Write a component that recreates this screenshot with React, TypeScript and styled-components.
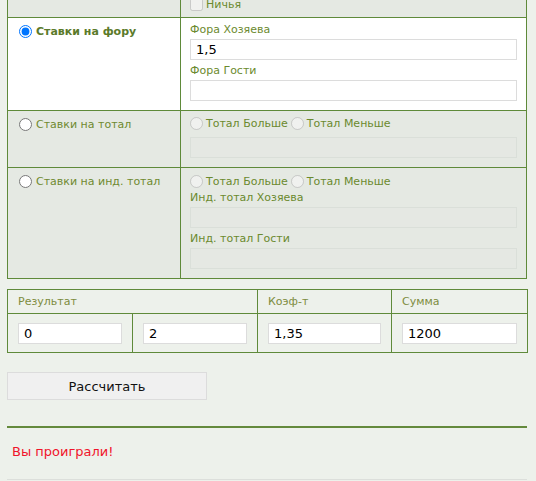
import React from "react";
import styled, { createGlobalStyle } from "styled-components";

const GlobalStyle = createGlobalStyle`
  html, body {
    margin: 0;
    padding: 0;
    background: #edf1eb;
    overflow: hidden;
  }
  body {
    font-family: "DejaVu Sans", Verdana, sans-serif;
    font-size: 11px;
    color: #6b8a2e;
  }
`;

const Page = styled.div`
  width: 520px;
  padding: 0 0 0 7px;
  margin-top: -9px;
`;

const BetTable = styled.table`
  width: 520px;
  border-collapse: collapse;
  table-layout: fixed;
`;

const Row = styled.tr<{ $white?: boolean }>`
  background: ${(p) => (p.$white ? "#ffffff" : "#e5e9e3")};
`;

const SideCell = styled.td`
  width: 173px;
  border: 1px solid #5f8a3a;
  vertical-align: top;
  padding: 5px 6px 5px 11px;
  box-sizing: border-box;
`;

const FieldCell = styled.td<{ $short?: boolean }>`
  border: 1px solid #5f8a3a;
  vertical-align: top;
  padding: 4px 9px ${(p) => (p.$short ? "4px" : "9px")} 9px;
`;

const Choice = styled.label<{ $bold?: boolean }>`
  display: flex;
  align-items: center;
  gap: 4px;
  height: 17px;
  font-weight: ${(p) => (p.$bold ? "bold" : "normal")};
  color: ${(p) => (p.$bold ? "#5b7a2a" : "#6f8a30")};
  white-space: nowrap;
`;

const Radio = styled.input.attrs({ type: "radio" })`
  margin: 0;
  width: 13px;
  height: 13px;
`;

const Check = styled.input.attrs({ type: "checkbox" })`
  margin: 0;
  width: 13px;
  height: 13px;
`;

const RadioLine = styled.div<{ $low?: boolean }>`
  display: flex;
  align-items: center;
  gap: 3px;
  height: 17px;
  padding-top: ${(p) => (p.$low ? "2px" : "0")};
  box-sizing: border-box;
  white-space: nowrap;
`;

const InlineChoice = styled.label`
  display: inline-flex;
  align-items: center;
  gap: 3px;
`;

const FieldLabel = styled.div`
  line-height: 15px;
  margin-top: 3px;
  &:first-child {
    margin-top: 0;
  }
  ${RadioLine} + & {
    margin-top: 1px;
  }
`;

const TextInput = styled.input.attrs({ type: "text" })<{ $gap?: number }>`
  display: block;
  box-sizing: border-box;
  width: 100%;
  height: 21px;
  margin: ${(p) => p.$gap ?? 2}px 0 0 0;
  padding: 1px 5px;
  border: 1px solid #dcdcdc;
  background: #ffffff;
  font-family: "DejaVu Sans", Verdana, sans-serif;
  font-size: 13px;
  color: #000;
  outline: none;
  &:disabled {
    background: #e5e8e3;
    border-color: #dadfd9;
  }
`;

const ResultTable = styled.table`
  width: 520px;
  margin-top: 10px;
  border-collapse: collapse;
  table-layout: fixed;
`;

const HeadCell = styled.th`
  border: 1px solid #5f8a3a;
  height: 23px;
  padding: 0 10px;
  text-align: left;
  font-weight: normal;
  color: #7d8c40;
`;

const BodyCell = styled.td`
  border: 1px solid #5f8a3a;
  padding: 7px 10px 8px;
`;

const CalcButton = styled.button`
  display: block;
  margin-top: 19px;
  width: 200px;
  height: 28px;
  background: #f0f0f0;
  border: 1px solid #dcdcdc;
  font-family: "DejaVu Sans", Verdana, sans-serif;
  font-size: 13px;
  color: #111;
  padding: 0;
`;

const GreenRule = styled.div`
  margin-top: 26px;
  height: 2px;
  background: #648a3c;
`;

const Verdict = styled.div`
  margin-top: 16px;
  padding-left: 5px;
  font-size: 13px;
  line-height: 16px;
  color: #f0142a;
`;

const GreyRule = styled.div`
  margin-top: 19px;
  height: 1px;
  background: #dcdfdb;
`;

export default function App() {
  return (
    <>
      <GlobalStyle />
      <Page>
        <BetTable>
          <tbody>
            <Row>
              <SideCell />
              <FieldCell $short>
                <RadioLine>
                  <InlineChoice>
                    <Check disabled /> Ничья
                  </InlineChoice>
                </RadioLine>
              </FieldCell>
            </Row>
            <Row $white>
              <SideCell>
                <Choice $bold>
                  <Radio name="bet" defaultChecked /> Ставки на фору
                </Choice>
              </SideCell>
              <FieldCell>
                <FieldLabel>Фора Хозяева</FieldLabel>
                <TextInput defaultValue="1,5" />
                <FieldLabel>Фора Гости</FieldLabel>
                <TextInput />
              </FieldCell>
            </Row>
            <Row>
              <SideCell>
                <Choice>
                  <Radio name="bet" /> Ставки на тотал
                </Choice>
              </SideCell>
              <FieldCell>
                <RadioLine>
                  <InlineChoice>
                    <Radio name="t1" disabled /> Тотал Больше
                  </InlineChoice>
                  <InlineChoice>
                    <Radio name="t1" disabled /> Тотал Меньше
                  </InlineChoice>
                </RadioLine>
                <TextInput disabled $gap={5} />
              </FieldCell>
            </Row>
            <Row>
              <SideCell>
                <Choice>
                  <Radio name="bet" /> Ставки на инд. тотал
                </Choice>
              </SideCell>
              <FieldCell>
                <RadioLine $low>
                  <InlineChoice>
                    <Radio name="t2" disabled /> Тотал Больше
                  </InlineChoice>
                  <InlineChoice>
                    <Radio name="t2" disabled /> Тотал Меньше
                  </InlineChoice>
                </RadioLine>
                <FieldLabel>Инд. тотал Хозяева</FieldLabel>
                <TextInput disabled />
                <FieldLabel>Инд. тотал Гости</FieldLabel>
                <TextInput disabled />
              </FieldCell>
            </Row>
          </tbody>
        </BetTable>

        <ResultTable>
          <colgroup>
            <col style={{ width: 125 }} />
            <col style={{ width: 125 }} />
            <col style={{ width: 134 }} />
            <col style={{ width: 136 }} />
          </colgroup>
          <thead>
            <tr>
              <HeadCell colSpan={2}>Результат</HeadCell>
              <HeadCell>Коэф-т</HeadCell>
              <HeadCell>Сумма</HeadCell>
            </tr>
          </thead>
          <tbody>
            <tr>
              <BodyCell>
                <TextInput defaultValue="0" />
              </BodyCell>
              <BodyCell>
                <TextInput defaultValue="2" />
              </BodyCell>
              <BodyCell>
                <TextInput defaultValue="1,35" />
              </BodyCell>
              <BodyCell>
                <TextInput defaultValue="1200" />
              </BodyCell>
            </tr>
          </tbody>
        </ResultTable>

        <CalcButton type="button">Рассчитать</CalcButton>
        <GreenRule />
        <Verdict>Вы проиграли!</Verdict>
        <GreyRule />
      </Page>
    </>
  );
}
